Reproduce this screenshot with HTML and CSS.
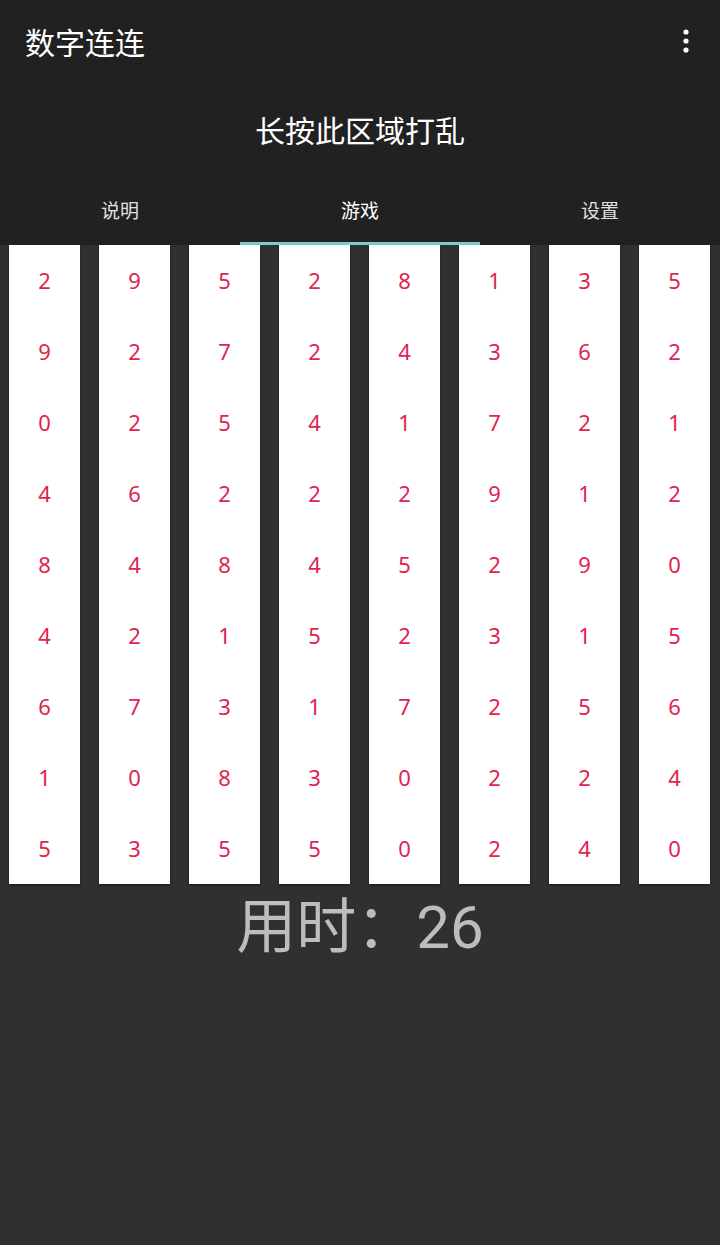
FILE: index.html
```html
<!DOCTYPE html>
<html lang="zh-CN">

<head>
    <meta charset="UTF-8">
    <meta name="viewport" content="width=device-width, initial-scale=1.0">
    <title>数字连连</title>
    <link rel="stylesheet" href="styles.css">
</head>

<body>
    <div class="app">
        <header class="appbar">
            <h1 class="appbar-title">数字连连</h1>
            <button class="appbar-menu" aria-label="更多">
                <svg width="8" height="26" viewBox="0 0 8 26">
                    <circle cx="4" cy="4" r="2.6" fill="#fff" />
                    <circle cx="4" cy="13" r="2.6" fill="#fff" />
                    <circle cx="4" cy="22" r="2.6" fill="#fff" />
                </svg>
            </button>
        </header>

        <div class="shuffle-area">长按此区域打乱</div>

        <nav class="tabs">
            <button class="tab">说明</button>
            <button class="tab active">游戏</button>
            <button class="tab">设置</button>
        </nav>

        <main class="board" id="board"></main>

        <div class="timer">用时：<span id="seconds">26</span></div>
    </div>

    <script>
        // column-major: each array is one vertical strip
        const columns = [
            [2, 9, 0, 4, 8, 4, 6, 1, 5],
            [9, 2, 2, 6, 4, 2, 7, 0, 3],
            [5, 7, 5, 2, 8, 1, 3, 8, 5],
            [2, 2, 4, 2, 4, 5, 1, 3, 5],
            [8, 4, 1, 2, 5, 2, 7, 0, 0],
            [1, 3, 7, 9, 2, 3, 2, 2, 2],
            [3, 6, 2, 1, 9, 1, 5, 2, 4],
            [5, 2, 1, 2, 0, 5, 6, 4, 0]
        ];

        const board = document.getElementById('board');

        columns.forEach(col => {
            const strip = document.createElement('div');
            strip.className = 'strip';
            col.forEach(n => {
                const cell = document.createElement('div');
                cell.className = 'cell';
                cell.textContent = n;
                strip.appendChild(cell);
            });
            board.appendChild(strip);
        });
    </script>
</body>

</html>
```

FILE: styles.css
```css
* {
    box-sizing: border-box;
    margin: 0;
    padding: 0;
}

body {
    font-family: Roboto, "Noto Sans CJK SC", sans-serif;
    background-color: #303030;
    color: #fff;
}

.app {
    width: 720px;
    min-height: 1245px;
}

/* App bar */
.appbar {
    height: 85px;
    display: flex;
    align-items: center;
    justify-content: space-between;
    padding: 0 25px 3px;
    background-color: #212121;
}

.appbar-title {
    font-family: "Noto Sans CJK SC", sans-serif;
    font-size: 30px;
    font-weight: 400;
}

.appbar-menu {
    background: none;
    border: none;
    display: flex;
    margin-right: 5px;
}

/* Shuffle hint */
.shuffle-area {
    height: 90px;
    display: flex;
    align-items: center;
    justify-content: center;
    padding-bottom: 2px;
    background-color: #212121;
    font-family: "Noto Sans CJK SC", sans-serif;
    font-size: 30px;
}

/* Tabs */
.tabs {
    display: flex;
    height: 70px;
    background-color: #212121;
}

.tab {
    flex: 1;
    background: none;
    border: none;
    border-bottom: 3px solid transparent;
    padding-top: 1px;
    color: #e0e0e0;
    font-family: "Noto Sans CJK SC", sans-serif;
    font-size: 19px;
}

.tab.active {
    color: #fff;
    border-bottom-color: #80cbc4;
}

/* Number board */
.board {
    display: flex;
    gap: 19px;
    padding: 0 10px 0 9px;
}

.strip {
    width: 71px;
    background-color: #fff;
    box-shadow: 0 1px 2px rgba(0, 0, 0, 0.5);
}

.cell {
    height: 71px;
    display: flex;
    align-items: center;
    justify-content: center;
    padding-bottom: 2px;
    font-family: "Noto Sans", sans-serif;
    font-size: 22px;
    color: #e0234f;
}

/* Timer */
.timer {
    text-align: center;
    margin-top: 4px;
    font-family: Roboto, "Noto Sans CJK SC", sans-serif;
    font-size: 60px;
    line-height: 80px;
    color: #bdbdbd;
}
```
